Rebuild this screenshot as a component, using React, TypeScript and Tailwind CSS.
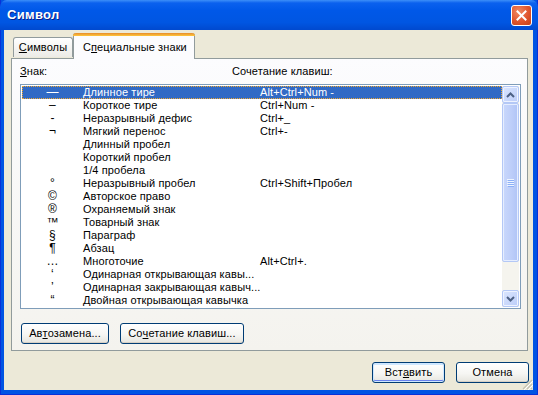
import React from "react";

const rows: [string, string, string][] = [
  ["—", "Длинное тире", "Alt+Ctrl+Num -"],
  ["–", "Короткое тире", "Ctrl+Num -"],
  ["-", "Неразрывный дефис", "Ctrl+_"],
  ["¬", "Мягкий перенос", "Ctrl+-"],
  ["", "Длинный пробел", ""],
  ["", "Короткий пробел", ""],
  ["", "1/4 пробела", ""],
  ["°", "Неразрывный пробел", "Ctrl+Shift+Пробел"],
  ["©", "Авторское право", ""],
  ["®", "Охраняемый знак", ""],
  ["™", "Товарный знак", ""],
  ["§", "Параграф", ""],
  ["¶", "Абзац", ""],
  ["…", "Многоточие", "Alt+Ctrl+."],
  ["‘", "Одинарная открывающая кавы...", ""],
  ["’", "Одинарная закрывающая кавыч...", ""],
  ["“", "Двойная открывающая кавычка", ""],
];

function XpButton({ children, className = "", isDefault = false }: { children: React.ReactNode; className?: string; isDefault?: boolean }) {
  return (
    <button
      className={`h-[21px] rounded-[3px] border border-[#003c74] bg-[linear-gradient(180deg,#ffffff_0%,#f6f6f3_55%,#e6e5de_100%)] text-[11px] text-black flex items-center justify-center ${
        isDefault
          ? "shadow-[inset_0_0_0_1px_#cee7ff,inset_0_-2px_0_#6982ee,inset_0_2px_0_#cee7ff]"
          : "shadow-[inset_0_-1px_0_#d6d0c5]"
      } ${className}`}
    >
      {children}
    </button>
  );
}

function ArrowBtn({ up }: { up: boolean }) {
  return (
    <div className="h-[17px] w-[17px] rounded-[2px] border border-[#b4c8f6] bg-[linear-gradient(135deg,#dbe6fe,#bccdf9)] shadow-[inset_0_0_0_1px_#eef3ff] flex items-center justify-center">
      <svg width="9" height="6" viewBox="0 0 9 6">
        <path d={up ? "M1 5 L4.5 1.5 L8 5" : "M1 1 L4.5 4.5 L8 1"} fill="none" stroke="#4d6185" strokeWidth="2" />
      </svg>
    </div>
  );
}

export default function App() {
  return (
    <div
      className="w-[538px] h-[395px] bg-[#0054e3] border-l border-r border-b border-[#0831d9] flex flex-col text-[11px] tracking-[0.1px] text-black"
      style={{ fontFamily: '"Liberation Sans", Arial, sans-serif' }}
    >
      {/* Title bar */}
      <div className="h-[30px] shrink-0 -mx-px bg-[linear-gradient(180deg,#3d8ff8_0%,#0b61ee_10%,#0058e8_35%,#0056e2_75%,#0049cf_100%)] rounded-t-[7px] flex items-center pl-[7px] pr-[6px]">
        <span className="text-white text-[13px] font-bold tracking-[0.3px] [text-shadow:1px_1px_0_#0a1f8a]">Символ</span>
        <div className="ml-auto h-[21px] w-[21px] rounded-[3px] border border-white bg-[radial-gradient(circle_at_35%_30%,#f08a64,#e0552d_55%,#c23f17)] flex items-center justify-center">
          <svg width="11" height="11" viewBox="0 0 11 11">
            <path d="M1.5 1.5 L9.5 9.5 M9.5 1.5 L1.5 9.5" stroke="#ffffff" strokeWidth="2" strokeLinecap="square" />
          </svg>
        </div>
      </div>

      {/* Body */}
      <div className="relative flex-1 ml-[3px] mr-[4px] mb-[4px] bg-[#ece9d8] flex flex-col">
        {/* Tabs */}
        <div className="ml-[7px] mt-[3px] flex items-end h-[25px] relative z-10">
          <div className="ml-[2px] h-[20px] w-[60px] rounded-t-[3px] border border-b-0 border-[#919b9c] bg-[linear-gradient(180deg,#ffffff,#ecebe6)] flex items-center justify-center mb-px">
            <span><u>С</u>имволы</span>
          </div>
          <div className="h-[26px] w-[122px] -mb-px rounded-t-[3px] border-x border-[#919b9c] bg-[#fcfcfe] flex flex-col">
            <div className="h-[3px] -mx-px rounded-t-[3px] bg-[linear-gradient(180deg,#e68b2c,#ffc73c)]" />
            <div className="flex-1 flex items-center pl-[9px] pb-[1px]">
              С<u>п</u>ециальные знаки
            </div>
          </div>
        </div>

        {/* Panel */}
        <div className="ml-[7px] w-[517px] h-[293px] border border-[#919b9c] bg-[linear-gradient(180deg,#fcfcfe,#f4f3ee)] flex flex-col">
          <div className="h-[25px] flex items-end pb-[5px] pl-[8px]">
            <span className="w-[212px]"><u>З</u>нак:</span>
            <span>Сочетание клавиш:</span>
          </div>
          <div className="ml-[8px] w-[501px] h-[225px] border border-[#7f9db9] bg-white p-px flex">
            <div className="flex-1 flex flex-col">
              {rows.map((r, i) => (
                <div
                  key={i}
                  className={`h-[13px] flex items-center leading-[13px] ${
                    i === 0 ? "bg-[#316ac5] text-white outline outline-1 outline-dotted outline-[#f0a830] -outline-offset-1" : ""
                  }`}
                >
                  <span className="w-[61px] text-center text-[12px]">{r[0]}</span>
                  <span className="w-[177px] whitespace-nowrap">{r[1]}</span>
                  <span className="whitespace-nowrap">{r[2]}</span>
                </div>
              ))}
            </div>
            <div className="w-[17px] flex flex-col bg-[#f5f4ee]">
              <ArrowBtn up />
              <div className="h-[159px] rounded-[2px] border border-[#b4c8f6] bg-[linear-gradient(90deg,#c9d8fc,#bccdf9_60%,#b0c4f6)] shadow-[inset_0_0_0_1px_#e6eeff] flex items-center justify-center">
                <svg width="7" height="8" viewBox="0 0 7 8">
                  <path d="M0 0.5 H7 M0 2.5 H7 M0 4.5 H7 M0 6.5 H7" stroke="#eef4ff" strokeWidth="1" />
                  <path d="M1 1.5 H7 M1 3.5 H7 M1 5.5 H7 M1 7.5 H7" stroke="#8cb0f8" strokeWidth="1" />
                </svg>
              </div>
              <div className="flex-1" />
              <ArrowBtn up={false} />
            </div>
          </div>
          <div className="mt-[14px] ml-[9px] flex gap-[11px]">
            <XpButton className="w-[88px]">
              Ав<u>т</u>озамена...
            </XpButton>
            <XpButton className="w-[124px]">
              Со<u>ч</u>етание клавиш...
            </XpButton>
          </div>
        </div>

        {/* Footer buttons */}
        <div className="mt-[11px] flex justify-end gap-[11px] mr-[5px]">
          <XpButton className="w-[73px]" isDefault>
            Вст<u>а</u>вить
          </XpButton>
          <XpButton className="w-[73px] mr-[-1px]">Отмена</XpButton>
        </div>

        {/* Resize grip */}
        <svg className="absolute right-0 bottom-0" width="12" height="12" viewBox="0 0 12 12">
          <path d="M11 2 L2 11 M11 6 L6 11 M11 10 L10 11" stroke="#c5c2b2" strokeWidth="1.2" />
          <path d="M12 3 L3 12 M12 7 L7 12" stroke="#ffffff" strokeWidth="1" />
        </svg>
      </div>
    </div>
  );
}
